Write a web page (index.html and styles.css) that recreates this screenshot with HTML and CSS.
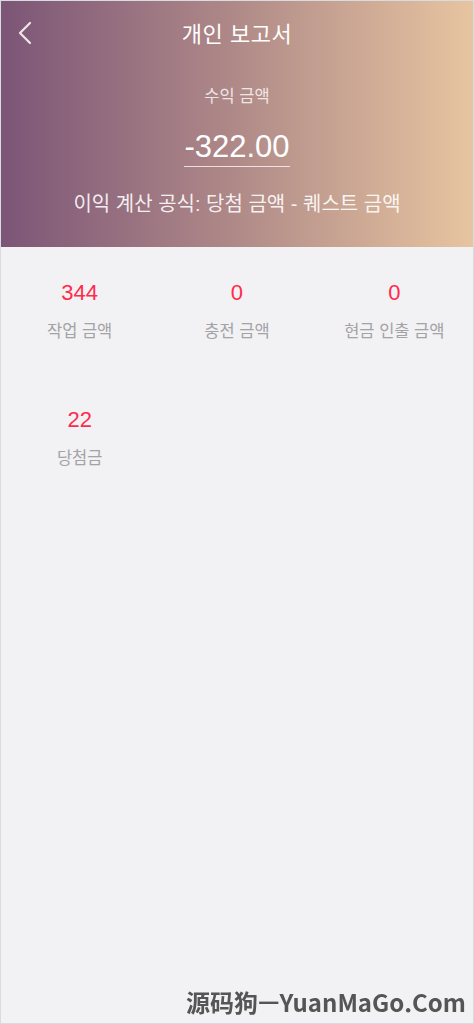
FILE: index.html
```html
<!DOCTYPE html>
<html lang="ko">
<head>
    <meta charset="UTF-8">
    <meta name="viewport" content="width=device-width, initial-scale=1.0">
    <title>개인 보고서</title>
    <link rel="stylesheet" href="styles.css">
</head>
<body>
    <div class="page">
        <header class="report-head">
            <div class="nav">
                <a class="back" href="#">
                    <svg width="16" height="24" viewBox="0 0 16 24">
                        <polyline points="13,2 3,12 13,22" fill="none" stroke="currentColor" stroke-width="2.2" stroke-linecap="round" stroke-linejoin="round"/>
                    </svg>
                </a>
                <h1>개인 보고서</h1>
            </div>
            <div class="profit">
                <p class="profit-label">수익 금액</p>
                <p class="profit-value">-322.00</p>
                <p class="formula">이익 계산 공식: 당첨 금액 - 퀘스트 금액</p>
            </div>
        </header>

        <div class="stats">
            <div class="stat">
                <span class="num">344</span>
                <span class="label">작업 금액</span>
            </div>
            <div class="stat">
                <span class="num">0</span>
                <span class="label">충전 금액</span>
            </div>
            <div class="stat">
                <span class="num">0</span>
                <span class="label">현금 인출 금액</span>
            </div>
            <div class="stat">
                <span class="num">22</span>
                <span class="label">당첨금</span>
            </div>
        </div>
    </div>

    <div class="watermark">源码狗—YuanMaGo.Com</div>
</body>
</html>
```

FILE: styles.css
```css
html, body {
    margin: 0;
    padding: 0;
}
body {
    font-family: "Liberation Sans", "Noto Sans CJK KR", sans-serif;
    background-color: #f2f1f4;
    color: #333;
}
.page {
    min-height: 100vh;
    box-sizing: border-box;
    border: 1px solid #d9dbe2;
}
.report-head {
    background: linear-gradient(to right, #7c5577, #b08a88 50%, #e7c5a0);
    color: #fff;
    height: 246px;
    box-sizing: border-box;
}
.nav {
    position: relative;
    height: 62px;
    display: flex;
    align-items: center;
    justify-content: center;
}
.nav h1 {
    margin: 0;
    font-size: 22px;
    font-weight: normal;
    letter-spacing: 0.5px;
}
.back {
    position: absolute;
    left: 16px;
    top: 20px;
    color: rgba(255,255,255,0.85);
    display: flex;
}
.profit {
    display: flex;
    flex-direction: column;
    align-items: center;
}
.profit p {
    margin: 0;
}
.profit-label {
    margin-top: 22px !important;
    font-size: 16.5px;
    color: rgba(255,255,255,0.8);
    line-height: 22px;
}
.profit-value {
    margin-top: 22px !important;
    font-size: 31px;
    line-height: 36px;
    padding-bottom: 1px;
    border-bottom: 1px solid rgba(255,255,255,0.75);
}
.formula {
    margin-top: 24px !important;
    font-size: 20px;
    line-height: 26px;
    color: rgba(255,255,255,0.9);
}
.stats {
    display: grid;
    grid-template-columns: repeat(3, 1fr);
    row-gap: 65px;
    padding-top: 33px;
}
.stat {
    display: flex;
    flex-direction: column;
    align-items: center;
}
.num {
    font-size: 22px;
    line-height: 26px;
    color: #ff2b4c;
}
.label {
    margin-top: 14px;
    font-size: 16.5px;
    line-height: 22px;
    color: #a3a3a6;
}
.watermark {
    position: fixed;
    right: 8px;
    bottom: 7px;
    font-family: "Noto Sans CJK SC", sans-serif;
    font-weight: bold;
    font-size: 24px;
    line-height: 30px;
    color: #555;
}
```
